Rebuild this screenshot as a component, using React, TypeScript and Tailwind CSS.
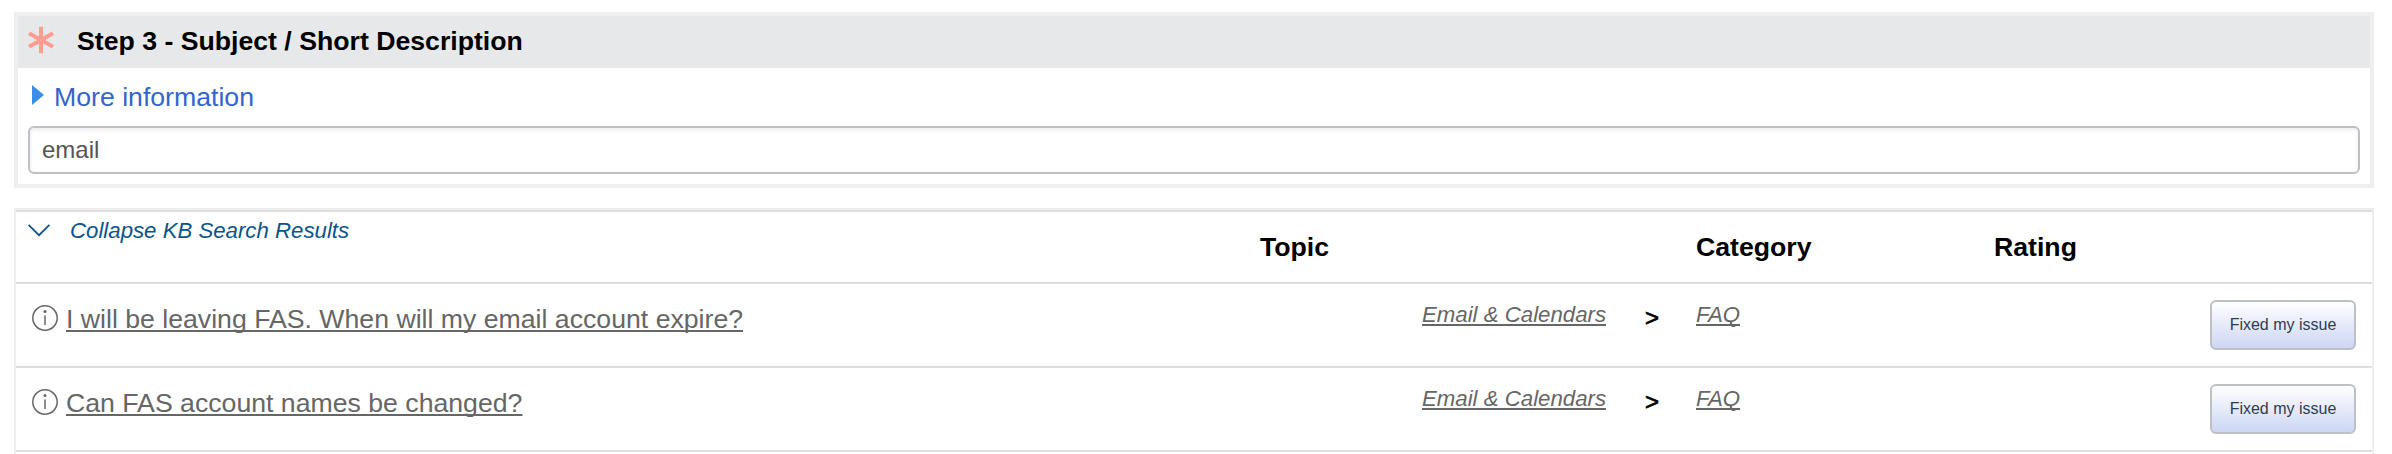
const articles = [
  "I will be leaving FAS. When will my email account expire?",
  "Can FAS account names be changed?",
];

function RequiredMark() {
  return (
    <svg className="mb-1 h-[28px] w-[28px]" viewBox="0 0 28 28" fill="none" stroke="#ff9c90" strokeWidth="4">
      <path d="M15 0.7V27.3M3 7.2L27 20.8M27 7.2L3 20.8" />
    </svg>
  );
}

function InfoIcon() {
  return (
    <svg className="h-[26px] w-[26px]" viewBox="0 0 26 26" fill="none" stroke="#666" strokeWidth="1.5">
      <circle cx="13" cy="13" r="12.2" />
      <path d="M13 10.4V20" />
      <circle cx="13" cy="6.6" r="1.5" fill="#666" stroke="none" />
    </svg>
  );
}

function ArticleRow({ title }: { title: string }) {
  return (
    <div className="grid h-[84px] grid-cols-[8px_42px_1356px_223px_51px_514px_146px] items-start border-b-2 border-[#ddd]">
      <span />
      <span className="pl-2 pt-[21px]">
        <InfoIcon />
      </span>
      <a className="pt-[17px] text-[26.667px] leading-[36px] text-[#666] underline decoration-[#666] decoration-2 underline-offset-[2px] [text-decoration-skip-ink:none]">
        {title}
      </a>
      <a className="pt-[16px] text-[22.222px] italic leading-[30px] text-[#666] underline decoration-2 underline-offset-[2px] [text-decoration-skip-ink:none]">
        Email &amp; Calendars
      </a>
      <span className="pt-[19px] text-[24px] leading-[30px] [-webkit-text-stroke:0.7px_black]">&gt;</span>
      <a className="pt-[16px] text-[22.222px] italic leading-[30px] text-[#666] underline decoration-2 underline-offset-[2px] [text-decoration-skip-ink:none]">
        FAQ
      </a>
      <button className="mt-4 h-[50px] rounded-[6px] border-2 border-[#bdc0c4] bg-linear-to-b from-white to-[#cdd6f3] pb-px text-[16px] leading-none text-[#2e3d4d]">
        Fixed my issue
      </button>
    </div>
  );
}

export default function App() {
  return (
    <main className="flex h-[454px] w-[2392px] flex-col gap-5 overflow-hidden bg-white pl-[14px] pr-[18px] pt-3 font-['Liberation_Sans',Arial,sans-serif] text-black">
      <section className="h-[176px] shrink-0 border-4 border-[#eee]">
        <header className="flex h-[52px] items-center bg-[#e6e8ea] pl-[8px]">
          <RequiredMark />
          <h1 className="pb-[2px] pl-[23px] text-[26.667px] font-bold leading-[50px]">
            Step 3 - Subject / Short Description
          </h1>
        </header>
        <div className="flex h-[58px] items-start pl-[14px] pt-[13px]">
          <svg className="mt-[3px] h-[22px] w-[13px]" viewBox="0 0 13 22">
            <path d="M0 1L12 11L0 21Z" fill="#3b8de8" />
          </svg>
          <a className="pl-[9px] text-[26.667px] leading-[32px] text-[#36c]">More information</a>
        </div>
        <input
          className="mx-[10px] block h-[48px] w-[2332px] rounded-[6px] border-2 border-[#bdc0c4] px-3 text-[24px] text-[#555] shadow-[inset_0_2px_4px_rgba(0,0,0,0.08)] outline-none"
          defaultValue="email"
        />
      </section>
      <section className="h-[260px] shrink-0 border-2 border-b-0 border-[#eee]">
        <header className="grid h-[74px] grid-cols-[1244px_436px_298px_1fr] items-start border-y-2 border-[#ddd]">
          <a className="flex items-start pl-[12px] pt-[4px] text-[22.222px] italic leading-[30px] text-[#0b5489]">
            <svg className="mt-[8px] h-[13px] w-[22px]" viewBox="0 0 22 13" fill="none" stroke="#0b5489" strokeWidth="1.7">
              <path d="M0.6 0.8L11 11.2L21.4 0.8" />
            </svg>
            <span className="pl-[20px]">Collapse KB Search Results</span>
          </a>
          <h2 className="pt-[17px] text-[26.667px] font-bold leading-[36px]">Topic</h2>
          <h2 className="pt-[17px] text-[26.667px] font-bold leading-[36px]">Category</h2>
          <h2 className="pt-[17px] text-[26.667px] font-bold leading-[36px]">Rating</h2>
        </header>
        {articles.map((title) => (
          <ArticleRow key={title} title={title} />
        ))}
      </section>
    </main>
  );
}
